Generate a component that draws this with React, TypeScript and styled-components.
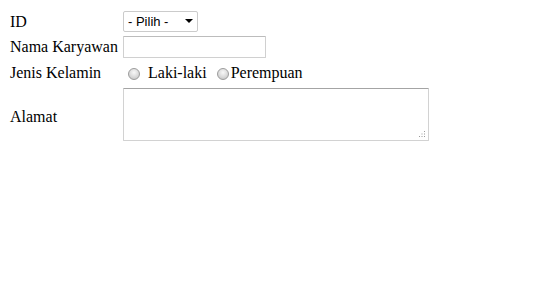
import React from "react";
import styled, { createGlobalStyle } from "styled-components";

const GlobalStyle = createGlobalStyle`
  html, body {
    margin: 0;
    padding: 0;
    background: #ffffff;
  }
  body {
    font-family: "Liberation Serif", "Times New Roman", serif;
    font-size: 16px;
    color: #000000;
  }
`;

const Form = styled.form`
  display: grid;
  grid-template-columns: 113px auto;
  grid-template-rows: 21px 22px 22px 58px;
  row-gap: 4px;
  align-items: center;
  justify-items: start;
  padding: 11px 0 0 10px;
`;

const Label = styled.label`
  line-height: 18px;
  white-space: nowrap;
`;

const SelectWrap = styled.div`
  position: relative;
  width: 75px;
  height: 21px;
`;

const Select = styled.select`
  appearance: none;
  -webkit-appearance: none;
  width: 100%;
  height: 100%;
  box-sizing: border-box;
  margin: 0;
  padding: 0 0 0 4px;
  border: 1px solid #cbcbcb;
  border-radius: 2px;
  background: #ffffff;
  font-family: "Liberation Sans", Tahoma, sans-serif;
  font-size: 13px;
  color: #000000;
  outline: none;
`;

const Arrow = styled.span`
  position: absolute;
  right: 5px;
  top: 8px;
  width: 0;
  height: 0;
  border-left: 4px solid transparent;
  border-right: 4px solid transparent;
  border-top: 4px solid #000000;
  pointer-events: none;
`;

const TextInput = styled.input`
  box-sizing: border-box;
  width: 143px;
  height: 22px;
  margin: 0;
  padding: 1px 3px;
  border: 1px solid #d0d0d0;
  border-top-color: #bcbcbc;
  border-radius: 1px;
  background: #ffffff;
  font-family: "Liberation Sans", sans-serif;
  font-size: 13px;
  outline: none;
`;

const RadioGroup = styled.div`
  display: flex;
  align-items: center;
  line-height: 18px;
`;

const Radio = styled.input<{ $left: number; $right: number }>`
  appearance: none;
  -webkit-appearance: none;
  box-sizing: border-box;
  width: 12px;
  height: 12px;
  margin: 1px ${(p) => p.$right}px 0 ${(p) => p.$left}px;
  border: 1px solid #9c9c9c;
  border-radius: 50%;
  background: radial-gradient(circle at 50% 35%, #f8f8f8 0%, #dadada 55%, #bdbdbd 100%);
`;

const Choice = styled.span<{ $gap: number }>`
  margin-left: ${(p) => p.$gap}px;
`;

const AreaWrap = styled.div`
  position: relative;
  align-self: start;
  width: 306px;
  height: 53px;
`;

const TextArea = styled.textarea`
  box-sizing: border-box;
  width: 100%;
  height: 100%;
  margin: 0;
  padding: 2px;
  resize: none;
  border: 1px solid #d2d2d2;
  border-top-color: #a4a4a4;
  border-radius: 1px;
  background: #ffffff;
  outline: none;
`;

const Grip = styled.svg`
  position: absolute;
  right: 3px;
  bottom: 3px;
  pointer-events: none;
`;

export default function App() {
  return (
    <>
      <GlobalStyle />
      <Form>
        <Label>ID</Label>
        <SelectWrap>
          <Select defaultValue="">
            <option value="">- Pilih -</option>
          </Select>
          <Arrow />
        </SelectWrap>

        <Label>Nama Karyawan</Label>
        <TextInput type="text" />

        <Label>Jenis Kelamin</Label>
        <RadioGroup>
          <Radio type="radio" name="jk" $left={5} $right={3} />
          <Choice $gap={5}>Laki-laki</Choice>
          <Radio type="radio" name="jk" $left={10} $right={2} />
          <Choice $gap={0}>Perempuan</Choice>
        </RadioGroup>

        <Label>Alamat</Label>
        <AreaWrap>
          <TextArea />
          <Grip width="7" height="7" viewBox="0 0 7 7">
            <rect x="5" y="0" width="1" height="1" fill="#9a9a9a" />
            <rect x="2.5" y="2.5" width="1" height="1" fill="#9a9a9a" />
            <rect x="5" y="2.5" width="1" height="1" fill="#9a9a9a" />
            <rect x="0" y="5" width="1" height="1" fill="#9a9a9a" />
            <rect x="2.5" y="5" width="1" height="1" fill="#9a9a9a" />
            <rect x="5" y="5" width="1" height="1" fill="#9a9a9a" />
          </Grip>
        </AreaWrap>
      </Form>
    </>
  );
}
